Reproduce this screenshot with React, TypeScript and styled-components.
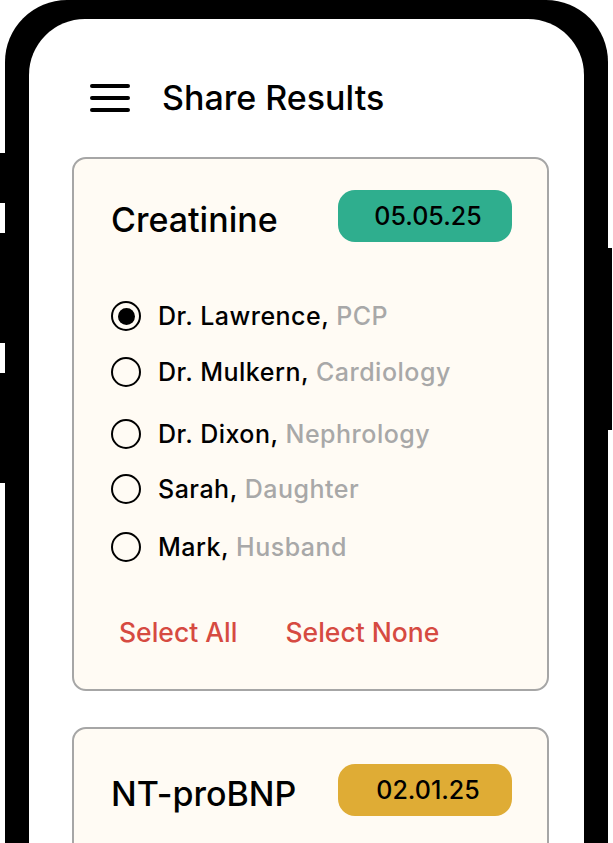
import React from 'react'
import styled, { createGlobalStyle } from 'styled-components'

const GlobalStyle = createGlobalStyle`
  html,
  body {
    margin: 0;
    padding: 0;
    background: #fff;
    overflow: hidden;
  }

  body {
    font-family: Inter, 'Liberation Sans', sans-serif;
    color: #000;
  }
`

const Device = styled.div`
  display: flex;
  align-items: flex-start;
  height: 843px;
  overflow: hidden;
`

const Rail = styled.div<{ $width: number }>`
  display: flex;
  flex-direction: column;
  flex-shrink: 0;
  width: ${p => p.$width}px;
`

const SideButton = styled.div<{ $top: number; $height: number }>`
  margin-top: ${p => p.$top}px;
  height: ${p => p.$height}px;
  background: #000;
`

const Frame = styled.div`
  box-sizing: border-box;
  flex-shrink: 0;
  width: 603px;
  height: 843px;
  padding: 19px 24px 0;
  background: #000;
  border-radius: 62px 62px 0 0;
`

const Screen = styled.div`
  height: 100%;
  background: #fff;
  border-radius: 56px 56px 0 0;
  overflow: hidden;
`

const Header = styled.header`
  display: flex;
  align-items: center;
  gap: 32px;
  height: 40px;
  padding: 59px 0 0 61px;
`

const Burger = styled.div`
  display: flex;
  flex-direction: column;
  gap: 8px;
  width: 40px;

  span {
    height: 4px;
    border-radius: 2px;
    background: #000;
  }
`

const PageTitle = styled.h1`
  margin: 0;
  font-size: 34px;
  font-weight: 500;
  line-height: 40px;
`

const CardList = styled.div`
  display: flex;
  flex-direction: column;
  gap: 36px;
  padding: 39px 35px 0 43px;
`

const Card = styled.section<{ $headTop: number }>`
  min-height: 160px;
  background: #fffbf4;
  border: 2px solid #a6a6a6;
  border-radius: 14px;
  padding: ${p => p.$headTop}px 35px 37px 37px;
`

const CardHead = styled.div`
  display: flex;
  align-items: center;
  justify-content: space-between;
  height: 52px;
`

const TestName = styled.h2`
  margin: 8px 0 0;
  font-size: 34px;
  font-weight: 500;
  line-height: 40px;
`

const DatePill = styled.div<{ $color: string }>`
  display: flex;
  align-items: center;
  justify-content: center;
  box-sizing: border-box;
  width: 174px;
  height: 52px;
  padding-left: 6px;
  border-radius: 17px;
  background: ${p => p.$color};
  font-size: 25px;
  font-weight: 500;
`

const Recipients = styled.ul`
  margin: 54px 0 0;
  padding: 0;
  list-style: none;
`

const Recipient = styled.li<{ $space: number }>`
  display: flex;
  align-items: center;
  gap: 17px;
  height: 40px;
  margin-top: ${p => p.$space}px;
  font-size: 25px;
  font-weight: 500;
  letter-spacing: 0.5px;
  line-height: 40px;
`

const Radio = styled.span<{ $checked: boolean }>`
  display: flex;
  align-items: center;
  justify-content: center;
  box-sizing: border-box;
  width: 30px;
  height: 30px;
  border: 2.3px solid #000;
  border-radius: 50%;

  &::after {
    content: '';
    display: ${p => (p.$checked ? 'block' : 'none')};
    width: 17px;
    height: 17px;
    border-radius: 50%;
    background: #000;
  }
`

const Name = styled.span`
  white-space: pre;
`

const Role = styled.span`
  color: #a8a8a8;
`

const Actions = styled.div`
  display: flex;
  gap: 48px;
  margin-top: 45px;
  padding-left: 8px;
`

const ActionLink = styled.button`
  padding: 0;
  border: none;
  background: none;
  color: #d64a41;
  font-family: inherit;
  font-size: 26.5px;
  font-weight: 500;
  line-height: 40px;
  cursor: pointer;
`

const recipients = [
  { name: 'Dr. Lawrence,', role: 'PCP', space: 0 },
  { name: 'Dr. Mulkern,', role: 'Cardiology', space: 16 },
  { name: 'Dr. Dixon,', role: 'Nephrology', space: 22 },
  { name: 'Sarah,', role: 'Daughter', space: 15 },
  { name: 'Mark,', role: 'Husband', space: 18 }
]

const results = [
  { test: 'Creatinine', date: '05.05.25', color: '#2fae8e', headTop: 31, open: true },
  { test: 'NT-proBNP', date: '02.01.25', color: '#dfac35', headTop: 35, open: false }
]

function App() {
  return (
    <>
      <GlobalStyle />
      <Device>
        <Rail $width={5}>
          <SideButton $top={153} $height={50} />
          <SideButton $top={30} $height={110} />
          <SideButton $top={30} $height={110} />
        </Rail>
        <Frame>
          <Screen>
            <Header>
              <Burger>
                <span />
                <span />
                <span />
              </Burger>
              <PageTitle>Share Results</PageTitle>
            </Header>
            <CardList>
              {results.map(r => (
                <Card key={r.test} $headTop={r.headTop}>
                  <CardHead>
                    <TestName>{r.test}</TestName>
                    <DatePill $color={r.color}>{r.date}</DatePill>
                  </CardHead>
                  {r.open && (
                    <>
                      <Recipients>
                        {recipients.map((p, i) => (
                          <Recipient key={p.name} $space={p.space}>
                            <Radio $checked={i === 0} />
                            <span>
                              <Name>{p.name} </Name>
                              <Role>{p.role}</Role>
                            </span>
                          </Recipient>
                        ))}
                      </Recipients>
                      <Actions>
                        <ActionLink>Select All</ActionLink>
                        <ActionLink>Select None</ActionLink>
                      </Actions>
                    </>
                  )}
                </Card>
              ))}
            </CardList>
          </Screen>
        </Frame>
        <Rail $width={4}>
          <SideButton $top={248} $height={182} />
        </Rail>
      </Device>
    </>
  )
}

export default App
